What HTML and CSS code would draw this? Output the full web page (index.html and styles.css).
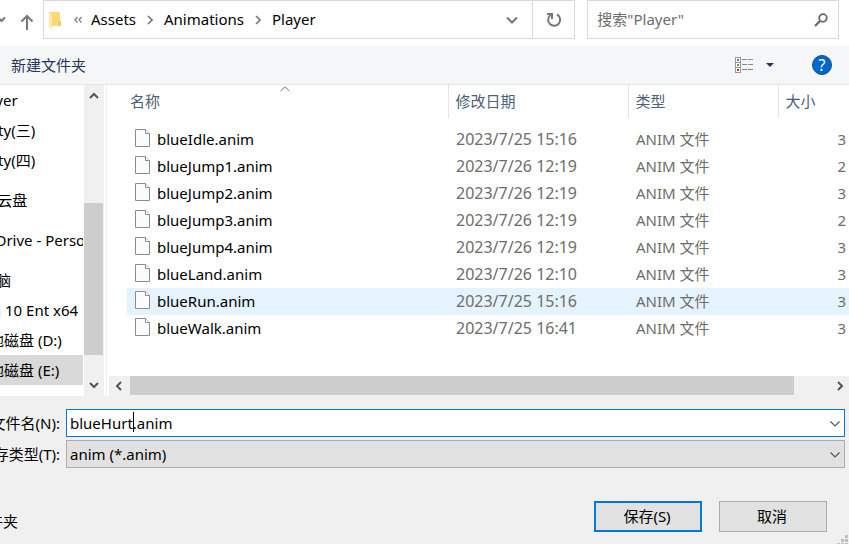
FILE: index.html
```html
<!DOCTYPE html>
<html lang="zh-CN">
<head>
<meta charset="utf-8">
<title>Player</title>
<link rel="stylesheet" href="styles.css">
</head>
<body>
<svg class="defs" width="0" height="0" aria-hidden="true"><symbol id="doc" viewBox="0 0 15 18"><path d="M.500.500h10l4 4v13H.500z" fill="#fafbfb" stroke="#8c8c8c"/><path d="M10.500.500v4h4" fill="#fff" stroke="#8c8c8c"/></symbol></svg>
<header class="navbar">
  <button class="plain recent" aria-label="最近"><svg width="8" height="8" viewBox="0 0 8 8"><path d="M-2 1.5 1.5 5 5 1.5" fill="none" stroke="#777" stroke-width="2"/></svg></button>
  <button class="plain up" aria-label="向上"><svg width="14" height="16" viewBox="0 0 14 16"><path d="M7 16V2M1.5 7.5 7 2l5.500 5.500" fill="none" stroke="#777" stroke-width="2"/></svg></button>
  <nav class="address">
    <svg class="folder" width="12" height="18" viewBox="0 0 12 18"><path d="M0 1h11v9h1v5H3v3L0 16z" fill="#f9d978"/><path d="M0 1 3 3v15L0 16z" fill="#ffe9a8"/><path d="M9 10h3v5H9z" fill="#f3cc68"/></svg>
    <svg class="more" width="8" height="8" viewBox="0 0 8 8"><path d="M3.500 1 1 3.800 3.500 6.500M7.500 1 5 3.800 7.500 6.500" fill="none" stroke="#777" stroke-width="1.200"/></svg>
    <a href="#assets">Assets</a>
    <svg class="sep" width="6" height="10" viewBox="0 0 6 10"><path d="M1 1l4 4-4 4" fill="none" stroke="#777" stroke-width="1.600"/></svg>
    <a href="#animations">Animations</a>
    <svg class="sep" width="6" height="10" viewBox="0 0 6 10"><path d="M1 1l4 4-4 4" fill="none" stroke="#777" stroke-width="1.600"/></svg>
    <a href="#player">Player</a>
    <button class="plain history" aria-label="历史"><svg width="12" height="8" viewBox="0 0 12 8"><path d="M1 1.500 6 6.500l5-5" fill="none" stroke="#777" stroke-width="2"/></svg></button>
    <button class="plain refresh" aria-label="刷新"><svg width="16" height="16" viewBox="0 0 16 16"><path d="M11 2.500A6 6 0 1 1 4.500 3" fill="none" stroke="#777" stroke-width="2"/><path d="M1 2h5v5" fill="none" stroke="#777" stroke-width="2"/></svg></button>
  </nav>
  <div class="search">
    <input type="search" aria-label="搜索" placeholder='搜索"Player"'>
    <svg width="14" height="14" viewBox="0 0 14 14"><circle cx="9" cy="5" r="3.800" fill="none" stroke="#686868" stroke-width="1.800"/><path d="M6.200 7.800 1 13" stroke="#686868" stroke-width="2.200"/></svg>
  </div>
</header>

<div class="toolbar">
  <button class="plain new-folder">新建文件夹</button>
  <button class="plain view" aria-label="视图">
    <svg width="18" height="16" viewBox="0 0 18 16" shape-rendering="crispEdges"><path d="M.5.500h5v15h-5zM.5 5.500h5M.5 10.500h5" fill="#fff" stroke="#999"/><path d="M2 2h2v2H2z" fill="#4683a8"/><path d="M2 7h2v2H2z" fill="#7c9635"/><path d="M2 12h2v2H2z" fill="#c32d1b"/><path d="M7 2.500h5m1 0h5M7 7.500h5m1 0h5M7 12.500h5m1 0h5" stroke="#888"/></svg>
    <svg width="8" height="4" viewBox="0 0 8 4"><path d="M0 0h8L4 4z" fill="#1e395b"/></svg>
  </button>
  <button class="plain help" aria-label="帮助">?</button>
</div>

<main class="browser">
  <nav class="tree">
    <ul>
      <li class="deep"><a href="#p">Player</a></li>
      <li class="deep"><a href="#u3">Unity(三)</a></li>
      <li class="deep"><a href="#u4">Unity(四)</a></li>
      <li class="root"><a href="#wps">WPS云盘</a></li>
      <li class="root"><a href="#od">OneDrive - Personal</a></li>
      <li class="root"><a href="#pc">此电脑</a></li>
      <li><a href="#c">Win 10 Ent x64</a></li>
      <li><a href="#d">本地磁盘 (D:)</a></li>
      <li class="current"><a href="#e">本地磁盘 (E:)</a></li>
    </ul>
  </nav>
  <div class="vscroll">
    <svg width="10" height="7" viewBox="0 0 10 7"><path d="M1 6l4-4 4 4" fill="none" stroke="#555" stroke-width="2"/></svg>
    <div class="vtrack"><div class="vthumb"></div></div>
    <svg width="10" height="7" viewBox="0 0 10 7"><path d="M1 1l4 4 4-4" fill="none" stroke="#555" stroke-width="2"/></svg>
  </div>
  <section class="files">
    <table>
      <colgroup><col><col class="c-date"><col class="c-type"><col class="c-size"></colgroup>
      <thead><tr>
        <th>名称<svg class="sort" width="10" height="6" viewBox="0 0 10 6"><path d="M.500 5 5 .800 9.500 5" fill="none" stroke="#777"/></svg></th>
        <th>修改日期</th><th>类型</th><th>大小</th>
      </tr></thead>
      <tbody>
        <tr><td><span class="file"><svg width="15" height="18"><use href="#doc"/></svg>blueIdle.anim</span></td><td class="date">2023/7/25 15:16</td><td>ANIM 文件</td><td>3</td></tr>
        <tr><td><span class="file"><svg width="15" height="18"><use href="#doc"/></svg>blueJump1.anim</span></td><td class="date">2023/7/26 12:19</td><td>ANIM 文件</td><td>2</td></tr>
        <tr><td><span class="file"><svg width="15" height="18"><use href="#doc"/></svg>blueJump2.anim</span></td><td class="date">2023/7/26 12:19</td><td>ANIM 文件</td><td>3</td></tr>
        <tr><td><span class="file"><svg width="15" height="18"><use href="#doc"/></svg>blueJump3.anim</span></td><td class="date">2023/7/26 12:19</td><td>ANIM 文件</td><td>2</td></tr>
        <tr><td><span class="file"><svg width="15" height="18"><use href="#doc"/></svg>blueJump4.anim</span></td><td class="date">2023/7/26 12:19</td><td>ANIM 文件</td><td>3</td></tr>
        <tr><td><span class="file"><svg width="15" height="18"><use href="#doc"/></svg>blueLand.anim</span></td><td class="date">2023/7/26 12:10</td><td>ANIM 文件</td><td>3</td></tr>
        <tr class="hover"><td><span class="file"><svg width="15" height="18"><use href="#doc"/></svg>blueRun.anim</span></td><td class="date">2023/7/25 15:16</td><td>ANIM 文件</td><td>3</td></tr>
        <tr><td><span class="file"><svg width="15" height="18"><use href="#doc"/></svg>blueWalk.anim</span></td><td class="date">2023/7/25 16:41</td><td>ANIM 文件</td><td>3</td></tr>
      </tbody>
    </table>
    <div class="hscroll">
      <svg width="7" height="10" viewBox="0 0 7 10"><path d="M6 1 2 5l4 4" fill="none" stroke="#555" stroke-width="2"/></svg>
      <div class="htrack"><div class="hthumb"></div></div>
      <svg width="7" height="10" viewBox="0 0 7 10"><path d="M1 1l4 4-4 4" fill="none" stroke="#555" stroke-width="2"/></svg>
    </div>
  </section>
</main>

<form class="save">
  <div class="field">
    <label for="name">文件名(N):</label>
    <div class="combo">
      <input id="name" type="text" value="blueHurt.anim">
      <span class="caret"></span>
      <svg class="chev" width="10" height="6" viewBox="0 0 10 6"><path d="M.500.500 5 5 9.500.500" fill="none" stroke="#555" stroke-width="1.200"/></svg>
    </div>
  </div>
  <div class="field">
    <label for="type">保存类型(T):</label>
    <div class="combo">
      <select id="type"><option>anim (*.anim)</option></select>
      <svg class="chev" width="10" height="6" viewBox="0 0 10 6"><path d="M.500.500 5 5 9.500.500" fill="none" stroke="#555" stroke-width="1.200"/></svg>
    </div>
  </div>
  <div class="actions">
    <button type="button" class="plain hide">隐藏文件夹</button>
    <button type="button" class="push primary">保存(S)</button>
    <button type="button" class="push">取消</button>
  </div>
  <svg class="grip" width="11" height="9" viewBox="0 0 11 9"><path d="M8 0h3v3H8zM4 4h3v3H4zM8 4h3v3H8zM0 8h3v1H0zM4 8h3v1H4zM8 8h3v1H8z" fill="#bfbfbf"/></svg>
</form>
</body>
</html>
```
FILE: styles.css
```css
* { box-sizing: border-box; }
body {
  margin: 0;
  min-height: 100vh;
  display: flex;
  flex-direction: column;
  overflow: hidden;
  background: #fff;
  color: #000;
  font: 15px/20px "Noto Sans", "Noto Sans CJK SC", sans-serif;
}
a { color: inherit; text-decoration: none; }
svg { display: block; flex: none; }
button, input, select { font: inherit; color: inherit; border-radius: 0; }
.plain { border: 0; padding: 0; background: none; }
.defs { position: absolute; }

.navbar { display: flex; align-items: center; height: 39px; padding-right: 10px; }
.recent { width: 20px; }
.up { width: 23px; padding-top: 4px; }
.address {
  flex: 1;
  min-width: 0;
  display: flex;
  align-items: center;
  height: 39px;
  padding-left: 5px;
  border: 1px solid #d9d9d9;
}
.address a { padding-bottom: 2px; }
.more { margin: 0 9px 0 13px; }
.sep { margin: 0 11px; }
.history { margin-left: auto; width: 40px; }
.refresh { width: 42px; height: 100%; border-left: 1px solid #d9d9d9; }
.history svg, .refresh svg { margin: 0 auto; }
.search {
  width: 30%;
  max-width: 253px;
  display: flex;
  align-items: center;
  height: 39px;
  margin-left: 12px;
  padding: 0 10px 0 9px;
  border: 1px solid #d9d9d9;
}
.search input {
  flex: 1;
  min-width: 0;
  padding: 0 0 2px;
  border: 0;
  outline: 0;
  background: none;
  appearance: none;
}
.search input::placeholder { color: #6d6d6d; }

.toolbar {
  display: flex;
  align-items: center;
  height: 39px;
  margin-top: 7px;
  padding: 0 17px 0 11px;
  background: #f5f6f8;
  border-bottom: 1px solid #e5e7e9;
}
.new-folder { color: #1e395b; }
.view { display: flex; align-items: center; gap: 13px; margin-left: auto; }
.help {
  width: 20px;
  height: 20px;
  margin-left: 38px;
  border: 1px solid #0b4f96;
  border-radius: 50%;
  background: #0067cb;
  color: #fff;
  font-size: 16px;
  line-height: 18px;
}

.browser { flex: 1; display: flex; min-height: 311px; }
.tree { width: 84px; overflow: hidden; white-space: nowrap; }
.tree ul { margin: 0; padding: 0 1px 0 0; list-style: none; }
.tree li { height: 30px; line-height: 30px; overflow: hidden; }
.tree a { display: block; margin-left: -26px; }
.tree .root { margin-top: 10px; }
.tree .root a { margin-left: -34px; }
.tree .current { background: #d9d9d9; }
.vscroll {
  width: 20px;
  display: flex;
  flex-direction: column;
  align-items: center;
  gap: 6px;
  padding: 7px 1px 7px 0;
  background: #f0f0f0;
}
.vtrack { flex: 1; width: 100%; display: flex; flex-direction: column; justify-content: flex-end; padding-bottom: 21px; }
.vthumb { height: 61%; background: #cdcdcd; }
.files {
  flex: 1;
  min-width: 0;
  display: flex;
  flex-direction: column;
  margin-left: 2px;
  padding-left: 2px;
  border-left: 1px solid #f0f0f0;
}
.files table {
  table-layout: fixed;
  border-collapse: collapse;
  width: calc(100% - 18px);
  margin-left: 18px;
}
.c-date { width: 180px; }
.c-type { width: 150px; }
.c-size { width: 71px; }
th {
  position: relative;
  height: 33px;
  padding: 0 7px 2px;
  color: #4c607a;
  font-weight: 400;
  text-align: left;
}
th + th { border-left: 1px solid #e5e5e5; }
th:first-child { padding-left: 3px; }
.sort { position: absolute; top: 1px; left: calc(50% - 7px); }
td { height: 27px; padding: 0 8px 2px; color: #6d6d6d; white-space: nowrap; }
td:first-child { color: #000; }
td:last-child { padding: 0 3px 2px; text-align: right; }
.date { font-size: 16px; }
tbody::before { content: ""; display: block; height: 8px; }
.hover { background: #e5f3ff; }
.file { display: flex; align-items: center; gap: 7px; }
.file svg { margin-bottom: 1px; }
.hscroll {
  height: 20px;
  display: flex;
  align-items: center;
  gap: 8px;
  margin-top: auto;
  padding: 0 5px 0 6px;
  background: #f0f0f0;
}
.htrack { flex: 1; height: 100%; padding: 0 0 1px; }
.hthumb { width: 95%; height: 100%; background: #cdcdcd; }

.save { position: relative; height: 148px; padding: 13px 4px 0 0; background: #f0f0f0; }
.field { display: flex; align-items: center; height: 28px; margin-bottom: 3px; }
.field label { width: 60px; margin-right: 6px; display: flex; justify-content: flex-end; white-space: nowrap; }
.combo { position: relative; flex: 1; height: 28px; }
.combo input, .combo select {
  width: 100%;
  height: 100%;
  padding: 0 24px 1px 3px;
  border: 1px solid #0078d7;
  outline: 0;
  background: #fff;
  appearance: none;
}
.combo select { border-color: #adadad; background: #e1e1e1; }
.caret { position: absolute; left: 67px; top: 3px; width: 1px; height: 20px; background: #000; }
.chev { position: absolute; right: 5px; top: 12px; pointer-events: none; }
.actions { display: flex; align-items: center; gap: 17px; margin-top: 33px; padding-right: 18px; }
.hide { width: 18px; margin-right: auto; display: flex; justify-content: flex-end; white-space: nowrap; padding-top: 8px; }
.push { width: 108px; height: 31px; padding: 0 2px 1px 0; border: 1px solid #adadad; background: #e1e1e1; }
.primary { border: 2px solid #0078d7; }
.grip { position: absolute; right: 1px; bottom: 0; }
```
